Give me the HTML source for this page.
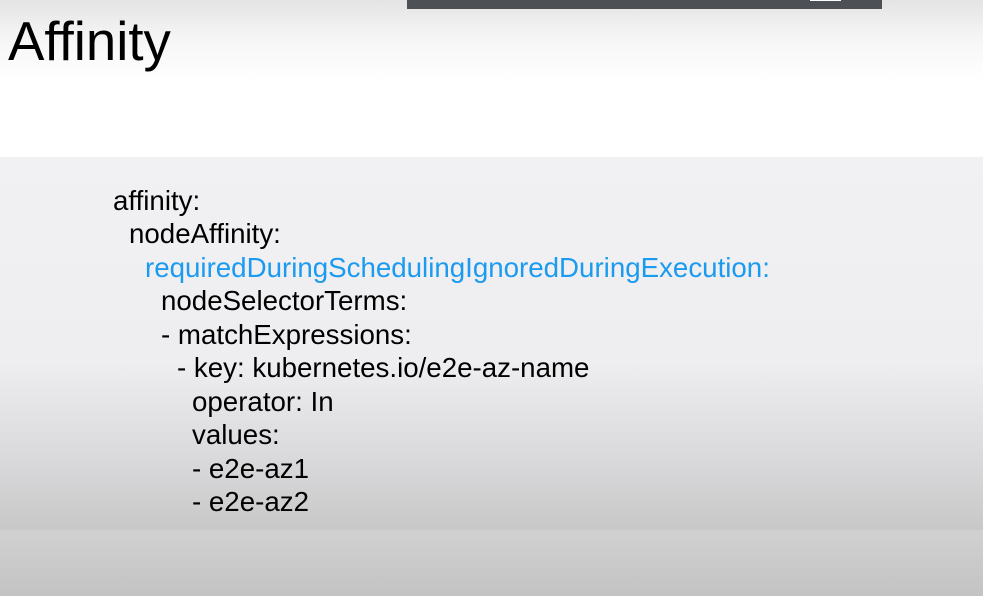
<!DOCTYPE html>
<html><head><style>
html,body{margin:0;padding:0;width:983px;height:596px;overflow:hidden}
body{position:relative;font-family:"Liberation Sans",Arial,sans-serif;
background:linear-gradient(#e4e4e4 0px,#f6f6f6 40px,#fff 80px,#fff 157px);}
.bar{position:absolute;left:407px;top:0;width:475px;height:9px;background:#4d5055}
.bar i{position:absolute;left:403px;top:0;width:31px;height:1px;background:#fff}
h1{position:absolute;left:8px;top:14px;margin:0;font-weight:normal;font-size:54.6px;line-height:55px;color:#000}
.panel{position:absolute;left:0;top:157px;width:983px;height:373px;background:linear-gradient(#f1f1f3 0%,#eeeef0 55%,#d6d6d8 85%,#c8c8c8 100%)}
.foot{position:absolute;left:0;top:530px;width:983px;height:66px;background:linear-gradient(#d1d1d1,#c3c3c3)}
.code{position:absolute;left:0;top:184px;font-size:27.7px;color:#000}
.code div{height:33.45px;line-height:33.45px;white-space:pre}
.b{color:#1b9bf0}
</style></head><body>
<div class="bar"><i></i></div>
<h1>Affinity</h1>
<div class="panel"></div>
<div class="foot"></div>
<div class="code"><div style="padding-left:113px">affinity:</div><div style="padding-left:129px">nodeAffinity:</div><div style="padding-left:145px" class="b">requiredDuringSchedulingIgnoredDuringExecution:</div><div style="padding-left:161px">nodeSelectorTerms:</div><div style="padding-left:161px">- matchExpressions:</div><div style="padding-left:177px">- key: kubernetes.io/e2e-az-name</div><div style="padding-left:192px">operator: In</div><div style="padding-left:192px">values:</div><div style="padding-left:192px">- e2e-az1</div><div style="padding-left:192px">- e2e-az2</div></div>
</body></html>
